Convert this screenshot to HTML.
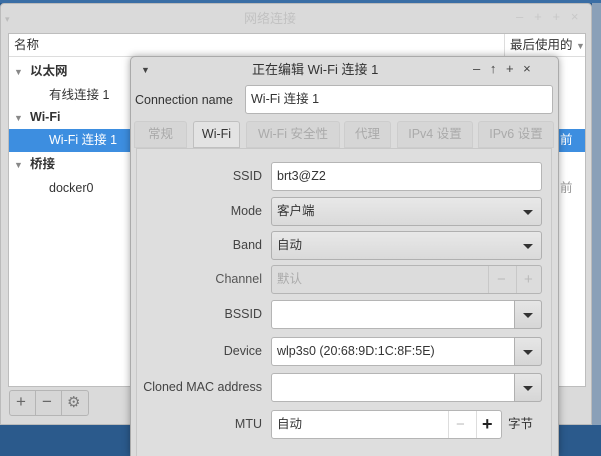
<!DOCTYPE html>
<html><head><meta charset="utf-8"><style>
*{box-sizing:border-box;margin:0;padding:0}
html,body{width:601px;height:456px;overflow:hidden}
body{position:relative;background:#2b5a8c;font-family:"Liberation Sans","Noto Sans CJK SC",sans-serif;font-size:12.5px;color:#333;line-height:15px}
.abs{position:absolute}
.win{left:0;top:3px;width:592px;height:422px;background:#dadada;border:1px solid #bbb;border-radius:4px 4px 0 0}
.list{left:8px;top:33px;width:578px;height:354px;background:#fff;border:1px solid #bdbdbd}
.dlg{left:130px;top:56px;width:429px;height:400px;background:#dcdcdc;border:1px solid #aaa;border-bottom:none;border-radius:5px 5px 0 0;box-shadow:0 0 8px rgba(0,0,0,.35)}
.t{white-space:nowrap}
.lbl{position:absolute;right:296px;white-space:nowrap;color:#444;text-align:right}
.ent{position:absolute;left:140px;width:271px;height:29px;background:#fff;border:1px solid #b5b5b5;border-radius:3px;padding:0 5px;line-height:27px;white-space:nowrap}
.cmb{position:absolute;left:140px;width:271px;height:29px;background:linear-gradient(#e8e8e8,#dadada);border:1px solid #b0b0b0;border-radius:3px;padding:0 5px;line-height:27px}
.arr{position:absolute;right:8px;top:12px;border-left:5px solid transparent;border-right:5px solid transparent;border-top:5px solid #333}
.btnr{position:absolute;right:-1px;top:-1px;width:28px;height:29px;border:1px solid #b0b0b0;border-radius:0 3px 3px 0;background:linear-gradient(#e6e6e6,#d6d6d6)}
.tab{position:absolute;top:64px;height:27px;border:1px solid #cdcdcd;border-radius:3px 3px 0 0;color:#aaa;text-align:center;line-height:25px;background:#d6d6d6}
</style></head><body>
<div class="abs" style="left:0;top:0;width:601px;height:3px;background:#3a6ea5"></div>
<div class="abs" style="left:592px;top:3px;width:9px;height:422px;background:#8aa0b8"></div>
<div class="abs win">
 <div class="abs t" style="left:4px;top:8px;color:#bbb;font-size:9px">▾</div>
 <div class="abs t" style="left:243px;top:7px;color:#c2c2c2;font-size:13px">网络连接</div>
 <div class="abs t" style="left:515px;top:5px;color:#c8c8c8;font-size:13px">–&nbsp;&nbsp; +&nbsp;&nbsp; +&nbsp;&nbsp; ×</div>
</div>
<div class="abs list">
 <div class="abs" style="left:0;top:0;width:576px;height:23px;border-bottom:1px solid #ddd"></div>
 <div class="abs t" style="left:5px;top:4px">名称</div>
 <div class="abs" style="left:495px;top:0;width:1px;height:23px;background:#ddd"></div>
 <div class="abs t" style="left:501px;top:4px">最后使用的 <span style="color:#888;font-size:9px">▼</span></div>
 <div class="abs t" style="left:5px;top:31px;font-size:9px;color:#888">▼</div>
 <div class="abs t" style="left:21px;top:30px;font-weight:bold">以太网</div>
 <div class="abs t" style="left:40px;top:54px">有线连接 1</div>
 <div class="abs t" style="left:5px;top:77px;font-size:9px;color:#888">▼</div>
 <div class="abs t" style="left:21px;top:76px;font-weight:bold">Wi-Fi</div>
 <div class="abs" style="left:0;top:95px;width:576px;height:23px;background:#3d8ee0"></div>
 <div class="abs t" style="left:40px;top:99px;color:#fff">Wi-Fi 连接 1</div>
 <div class="abs t" style="left:551px;top:99px;color:#fff">前</div>
 <div class="abs t" style="left:5px;top:124px;font-size:9px;color:#888">▼</div>
 <div class="abs t" style="left:21px;top:123px;font-weight:bold">桥接</div>
 <div class="abs t" style="left:40px;top:147px">docker0</div>
 <div class="abs t" style="left:551px;top:147px;color:#999">前</div>
</div>
<div class="abs" style="left:9px;top:390px;width:80px;height:26px;border:1px solid #b5b5b5;background:#d6d6d6;border-radius:3px"></div>
<div class="abs" style="left:35px;top:391px;width:1px;height:24px;background:#b5b5b5"></div>
<div class="abs" style="left:61px;top:391px;width:1px;height:24px;background:#b5b5b5"></div>
<div class="abs t" style="left:16px;top:394px;font-size:17px;color:#666">+</div>
<div class="abs t" style="left:42px;top:394px;font-size:17px;color:#666">−</div>
<div class="abs t" style="left:67px;top:395px;font-size:15px;color:#777">⚙</div>

<div class="abs dlg">
 <div class="abs t" style="left:10px;top:6px;font-size:9px;color:#444">▼</div>
 <div class="abs t" style="left:121px;top:5px;font-size:13px;color:#333">正在编辑 Wi-Fi 连接 1</div>
 <div class="abs t" style="left:342px;top:4px;font-size:13px;color:#444;word-spacing:6px">– ↑ + ×</div>
 <div class="abs t" style="left:4px;top:36px">Connection name</div>
 <div class="abs" style="left:114px;top:28px;width:308px;height:29px;background:#fff;border:1px solid #b5b5b5;border-radius:3px;padding:0 5px;line-height:27px">Wi-Fi 连接 1</div>
 <div class="tab" style="left:3px;width:53px">常规</div>
 <div class="tab" style="left:62px;width:47px;color:#333;background:#e3e3e3;border-color:#c0c0c0">Wi-Fi</div>
 <div class="tab" style="left:115px;width:94px">Wi-Fi 安全性</div>
 <div class="tab" style="left:213px;width:47px">代理</div>
 <div class="tab" style="left:266px;width:76px">IPv4 设置</div>
 <div class="tab" style="left:347px;width:76px">IPv6 设置</div>
 <div class="abs" style="left:5px;top:91px;width:416px;height:320px;border:1px solid #c8c8c8;background:#dedede"></div>
 <div class="lbl" style="top:112px">SSID</div>
 <div class="ent" style="top:105px">brt3@Z2</div>
 <div class="lbl" style="top:147px">Mode</div>
 <div class="cmb" style="top:140px">客户端<span class="arr"></span></div>
 <div class="lbl" style="top:181px">Band</div>
 <div class="cmb" style="top:174px">自动<span class="arr"></span></div>
 <div class="lbl" style="top:215px;color:#555">Channel</div>
 <div class="ent" style="top:208px;background:#dcdcdc;color:#aaa">默认
  <div class="abs" style="left:216px;top:0;width:1px;height:27px;background:#c8c8c8"></div>
  <div class="abs" style="left:244px;top:0;width:1px;height:27px;background:#c8c8c8"></div>
  <div class="abs" style="left:225px;top:0;font-size:15px;color:#bbb">−</div>
  <div class="abs" style="left:252px;top:0;font-size:15px;color:#bbb">+</div>
 </div>
 <div class="lbl" style="top:250px">BSSID</div>
 <div class="ent" style="top:243px"><span class="btnr"><span class="arr"></span></span></div>
 <div class="lbl" style="top:287px">Device</div>
 <div class="ent" style="top:280px">wlp3s0 (20:68:9D:1C:8F:5E)<span class="btnr"><span class="arr"></span></span></div>
 <div class="lbl" style="top:323px">Cloned MAC address</div>
 <div class="ent" style="top:316px"><span class="btnr"><span class="arr"></span></span></div>
 <div class="lbl" style="top:360px">MTU</div>
 <div class="ent" style="top:353px;width:231px">自动
  <div class="abs" style="left:176px;top:0;width:1px;height:27px;background:#ddd"></div>
  <div class="abs" style="left:204px;top:0;width:1px;height:27px;background:#ddd"></div>
  <div class="abs" style="left:184px;top:0;font-size:15px;color:#bbb">−</div>
  <div class="abs" style="left:210px;top:0;font-size:18px;color:#222;font-weight:bold">+</div>
 </div>
 <div class="abs t" style="left:377px;top:360px">字节</div>
</div>
</body></html>
